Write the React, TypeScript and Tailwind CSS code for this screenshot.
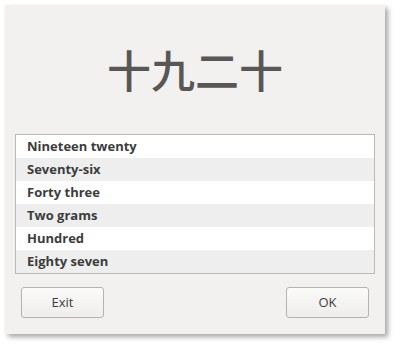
import React from 'react';

const items = ['Nineteen twenty', 'Seventy-six', 'Forty three', 'Two grams', 'Hundred', 'Eighty seven'];

export default function App() {
  return (
    <div className="w-[394px] h-[344px] bg-white pt-[5px] pl-[5px]" style={{ fontFamily: '"Open Sans", "Noto Sans", sans-serif' }}>
      <div className="w-[380px] h-[329px] bg-[#f2f1f0] shadow-[3px_3px_5px_rgba(0,0,0,0.35)] flex flex-col px-[10px]">
        {/* Title */}
        <div className="h-[129px] flex items-center justify-center pb-[2px]">
          <span
            className="text-[44px] leading-none text-[#585755] font-medium"
            style={{ fontFamily: '"Noto Sans CJK SC", sans-serif' }}
          >
            十九二十
          </span>
        </div>

        {/* List */}
        <div className="border border-[#bcbab7] bg-white">
          {items.map((item, i) => (
            <div
              key={item}
              className={`h-[23px] flex items-center pl-[11px] text-[13px] font-bold text-[#3c3c3c] ${i % 2 === 1 ? 'bg-[#eeeeee]' : 'bg-white'}`}
            >
              {item}
            </div>
          ))}
        </div>

        {/* Buttons */}
        <div className="flex justify-between mt-[13px] px-[6px]">
          <button className="w-[83px] h-[31px] rounded-[3px] border border-[#b5b3b0] bg-gradient-to-b from-[#fbfbfa] to-[#eeedec] text-[13px] text-[#3c3c3c]">
            Exit
          </button>
          <button className="w-[83px] h-[31px] rounded-[3px] border border-[#b5b3b0] bg-gradient-to-b from-[#fbfbfa] to-[#eeedec] text-[13px] text-[#3c3c3c]">
            OK
          </button>
        </div>
      </div>
    </div>
  );
}
